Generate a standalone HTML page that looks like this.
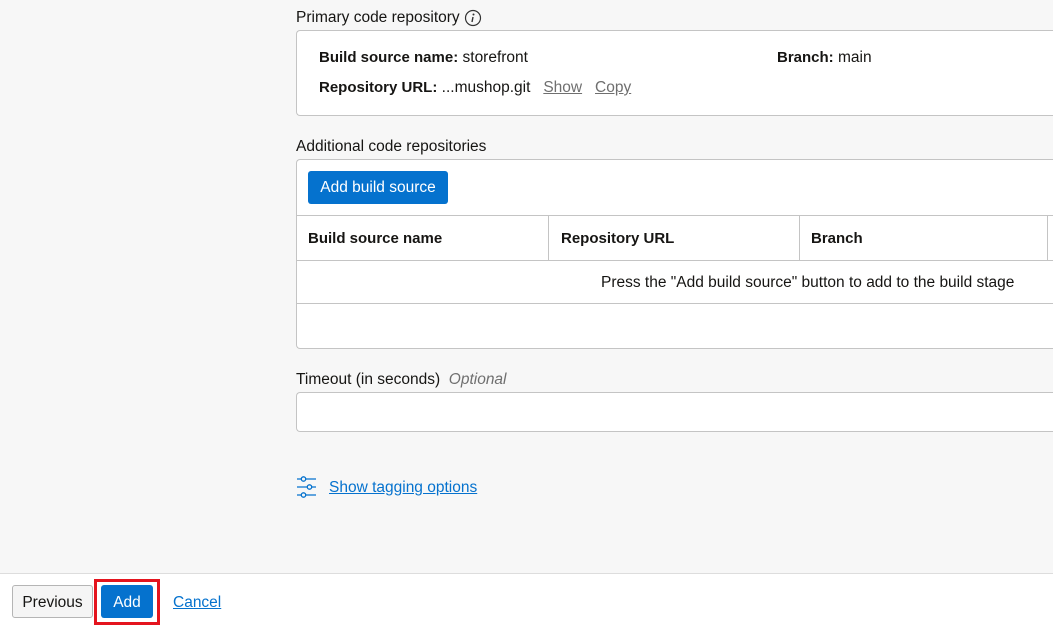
<!DOCTYPE html>
<html><head><style>
body{margin:0;width:1053px;height:627px;overflow:hidden;background:#f7f7f7;font-family:"Liberation Sans",sans-serif;font-size:15.5px;color:#161513;position:relative}
.a{position:absolute;white-space:nowrap}
.box{position:absolute;background:#fff;border:1px solid #c4c4c4;border-radius:4px;border-right:none}
.l{position:absolute;background:#c4c4c4}
b{font-weight:bold;font-size:15px}
.u{text-decoration:underline;color:#6f6f6f}
.lk{color:#0572ce;text-decoration:underline}
</style></head><body>
<div class="a" style="left:296px;top:9px">Primary code repository</div>
<svg class="a" style="left:464px;top:9px" width="18" height="18" viewBox="0 0 18 18"><circle cx="9" cy="9" r="7.5" fill="none" stroke="#333" stroke-width="1.2"/><circle cx="9.5" cy="5.5" r="1" fill="#333"/><path d="M9 8 L8 13" stroke="#333" stroke-width="1.4"/></svg>
<div class="box" style="left:296px;top:30px;width:760px;height:84px"></div>
<div class="a" style="left:319px;top:49px"><b>Build source name:</b> storefront</div>
<div class="a" style="left:777px;top:49px"><b>Branch:</b> main</div>
<div class="a" style="left:319px;top:79px"><b>Repository URL:</b> ...mushop.git &nbsp; <span class="u">Show</span> &nbsp; <span class="u">Copy</span></div>
<div class="a" style="left:296px;top:138px">Additional code repositories</div>
<div class="box" style="left:296px;top:159px;width:760px;height:188px"></div>
<div class="a" style="left:308px;top:171px;width:140px;height:33px;background:#0572ce;border-radius:3px;color:#fff;text-align:center;line-height:34px;font-size:15.5px">Add build source</div>
<div class="l" style="left:297px;top:215px;width:756px;height:1px"></div>
<div class="l" style="left:297px;top:260px;width:756px;height:1px"></div>
<div class="l" style="left:297px;top:303px;width:756px;height:1px"></div>
<div class="l" style="left:548px;top:215px;width:1px;height:45px"></div>
<div class="l" style="left:799px;top:215px;width:1px;height:45px"></div>
<div class="l" style="left:1047px;top:215px;width:1px;height:45px"></div>
<div class="a" style="left:308px;top:230px"><b>Build source name</b></div>
<div class="a" style="left:561px;top:230px"><b>Repository URL</b></div>
<div class="a" style="left:811px;top:230px"><b>Branch</b></div>
<div class="a" style="left:601px;top:274px">Press the "Add build source" button to add to the build stage</div>
<div class="a" style="left:296px;top:371px">Timeout (in seconds) &nbsp;<i style="color:#6f6f6f">Optional</i></div>
<div class="box" style="left:296px;top:392px;width:760px;height:38px"></div>
<svg class="a" style="left:296px;top:476px" width="22" height="22" viewBox="0 0 22 22" fill="none" stroke="#0572ce" stroke-width="1.3"><path d="M1 3h4M10 3h10M1 11h10M16 11h4M1 19h4M10 19h10"/><circle cx="7.5" cy="3" r="2.2"/><circle cx="13.5" cy="11" r="2.2"/><circle cx="7.5" cy="19" r="2.2"/></svg>
<div class="a lk" style="left:329px;top:479px">Show tagging options</div>
<div class="a" style="left:0;top:573px;width:1053px;height:54px;background:#fff;border-top:1px solid #ddd"></div>
<div class="a" style="left:12px;top:585px;width:79px;height:31px;border:1px solid #b5b5b5;border-radius:3px;background:#f5f5f5;text-align:center;line-height:33px">Previous</div>
<div class="a" style="left:94px;top:579px;width:60px;height:40px;border:3px solid #e4141e"></div>
<div class="a" style="left:101px;top:585px;width:52px;height:33px;background:#0572ce;border-radius:3px;color:#fff;text-align:center;line-height:35px">Add</div>
<div class="a lk" style="left:173px;top:594px">Cancel</div>
</body></html>
